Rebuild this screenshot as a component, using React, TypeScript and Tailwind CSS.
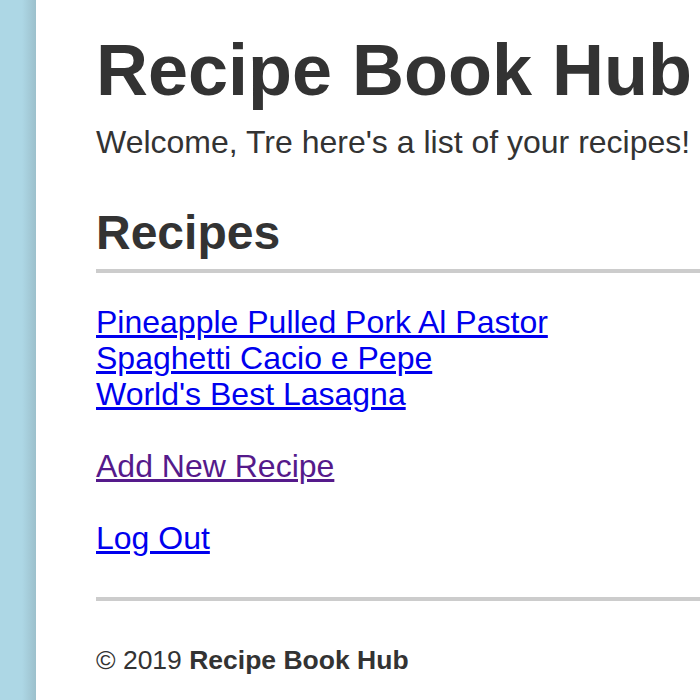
import React from "react";

const recipes = [
  "Pineapple Pulled Pork Al Pastor",
  "Spaghetti Cacio e Pepe",
  "World's Best Lasagna",
];

const App: React.FC = () => {
  return (
    <div className="flex min-h-screen bg-white font-['Liberation_Sans',Arial,sans-serif] text-[#333]">
      {/* Sidebar strip */}
      <div className="w-[36px] shrink-0 bg-[linear-gradient(to_right,#add7e5_0px,#add7e5_22px,#9cc0cc_36px)]" />

      {/* Main */}
      <div className="flex-1 pl-[60px] pt-[34px] overflow-hidden">
        <h1 className="text-[72px] leading-[72px] font-bold whitespace-nowrap">
          Recipe Book Hub
        </h1>
        <p className="mt-[18px] text-[32px] leading-[36px] whitespace-nowrap">
          Welcome, Tre here's a list of your recipes!
        </p>

        <h2 className="mt-[49px] text-[48px] leading-[48px] font-bold">Recipes</h2>
        <div className="mt-[12px] h-[4px] bg-[#ccc]" />

        <div className="mt-[31px] text-[32px] leading-[36px]">
          {recipes.map((name) => (
            <div key={name}>
              <a href="#" className="text-[#0000ee] underline">
                {name}
              </a>
            </div>
          ))}
          <div className="mt-[36px]">
            <a href="#" className="text-[#551a8b] underline">
              Add New Recipe
            </a>
          </div>
          <div className="mt-[36px]">
            <a href="#" className="text-[#0000ee] underline">
              Log Out
            </a>
          </div>
        </div>

        <div className="mt-[41px] h-[4px] bg-[#ccc]" />

        {/* Footer */}
        <p className="mt-[44px] text-[26.5px] leading-[30px] whitespace-nowrap">
          © 2019 <span className="font-bold">Recipe Book Hub</span>
        </p>
      </div>
    </div>
  );
};

export default App;
